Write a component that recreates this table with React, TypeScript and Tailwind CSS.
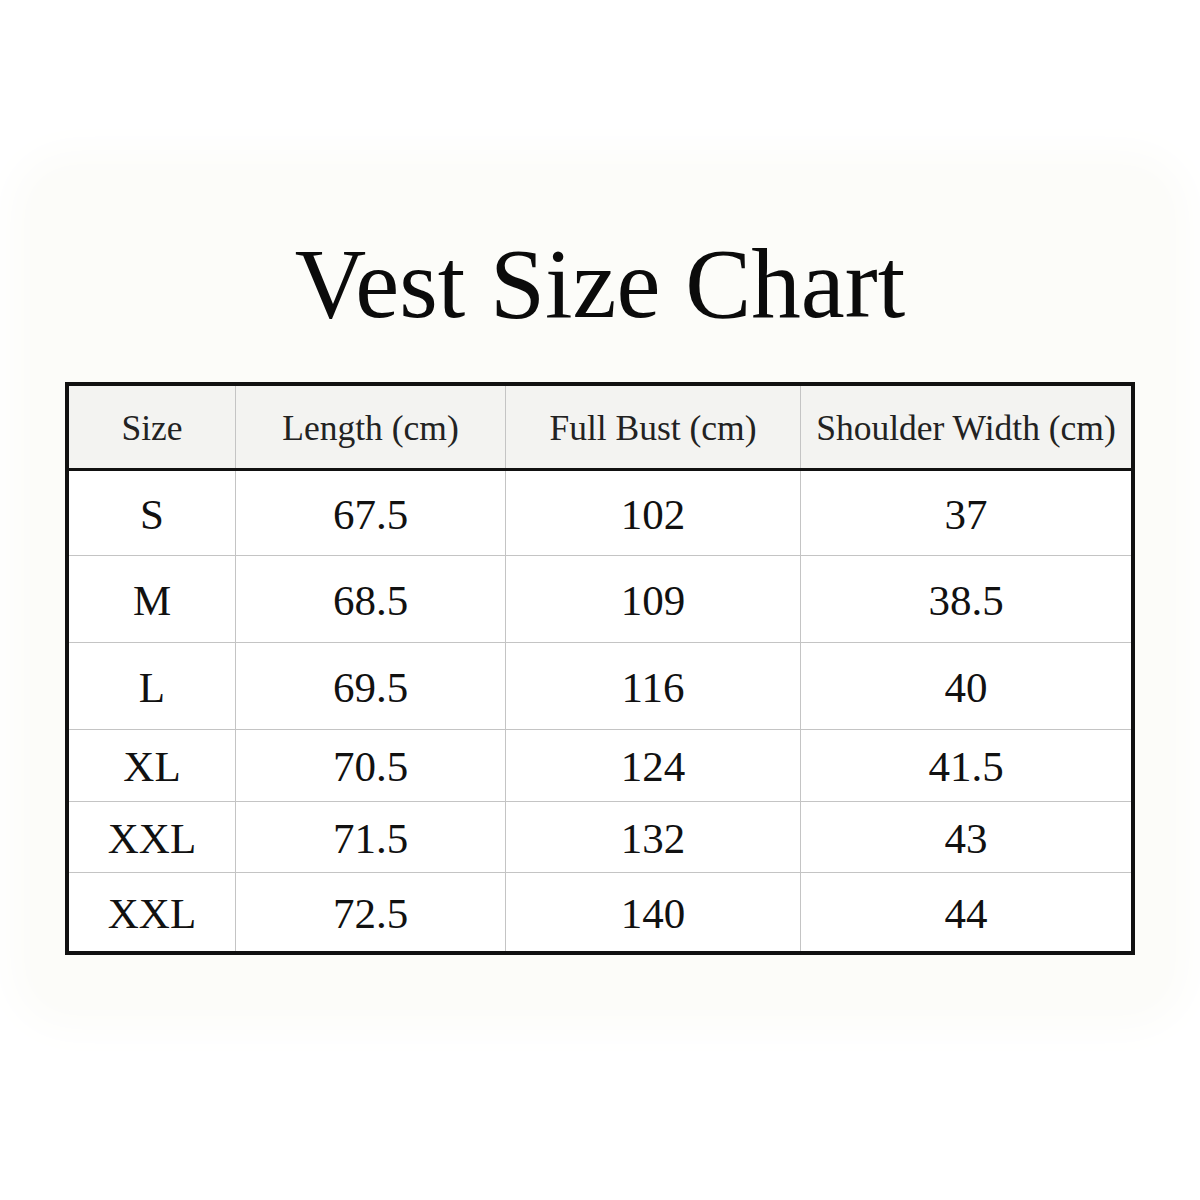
import React from 'react';

const headers = ['Size', 'Length (cm)', 'Full Bust (cm)', 'Shoulder Width (cm)'];

const rows = [
  { size: 'S', length: '67.5', bust: '102', shoulder: '37', h: 'h-[85px]' },
  { size: 'M', length: '68.5', bust: '109', shoulder: '38.5', h: 'h-[87px]' },
  { size: 'L', length: '69.5', bust: '116', shoulder: '40', h: 'h-[87px]' },
  { size: 'XL', length: '70.5', bust: '124', shoulder: '41.5', h: 'h-[72px]' },
  { size: 'XXL', length: '71.5', bust: '132', shoulder: '43', h: 'h-[71px]' },
  { size: 'XXL', length: '72.5', bust: '140', shoulder: '44', h: 'h-[78px]' },
];

const colWidths = ['w-[167px]', 'w-[270px]', 'w-[295px]', 'w-[330px]'];

const App = () => {
  return (
    <div
      className="w-[1200px] h-[1200px] bg-white pt-[170px] px-[30px] text-[#111]"
      style={{ fontFamily: '"Liberation Serif", "Times New Roman", serif' }}
    >
      {/* faint paper backdrop */}
      <div className="h-[840px] bg-[#fcfcf9] rounded-[40px] shadow-[0_0_40px_20px_#fcfcf9] flex flex-col items-center">
        <h1 className="mt-[64px] text-[99px] leading-none font-normal text-[#0b0b0b]">
          Vest Size Chart
        </h1>

        <div className="mt-[49px] w-[1070px] border-4 border-[#111] bg-white">
          {/* header */}
          <div className="flex h-[85px] bg-[#f3f3f1] border-b-[3px] border-[#111]">
            {headers.map((label, i) => (
              <div
                key={label}
                className={`${colWidths[i]} flex items-center justify-center pt-[3px] text-[35.5px] text-[#222] ${
                  i < 3 ? 'border-r border-[#c4c4c4]' : ''
                }`}
              >
                {label}
              </div>
            ))}
          </div>

          {rows.map((row, r) => {
            const cells = [row.size, row.length, row.bust, row.shoulder];
            return (
              <div
                key={r}
                className={`flex ${row.h} ${r < rows.length - 1 ? 'border-b border-[#c4c4c4]' : ''}`}
              >
                {cells.map((v, i) => (
                  <div
                    key={i}
                    className={`${colWidths[i]} flex items-center justify-center pt-[4px] text-[43px] text-[#111] ${
                      i < 3 ? 'border-r border-[#c4c4c4]' : ''
                    }`}
                  >
                    {v}
                  </div>
                ))}
              </div>
            );
          })}
        </div>
      </div>
    </div>
  );
};

export default App;
